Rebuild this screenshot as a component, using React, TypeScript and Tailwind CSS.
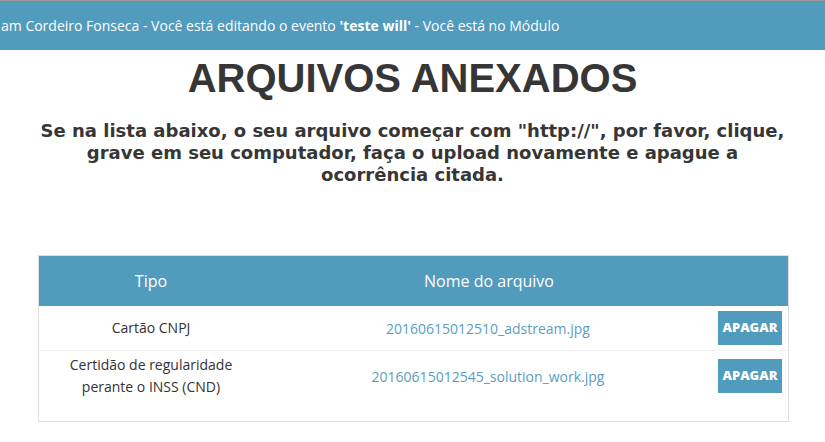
export default function App() {
  const rows = [
    { tipo: ["Cartão CNPJ"], arquivo: "20160615012510_adstream.jpg" },
    {
      tipo: ["Certidão de regularidade", "perante o INSS (CND)"],
      arquivo: "20160615012545_solution_work.jpg",
    },
  ];

  return (
    <div className="w-[825px] h-[442px] bg-white overflow-hidden font-['Open_Sans',sans-serif]">
      <div className="h-[50px] border-t border-[#9a9a9a] bg-[#519bbd] flex items-center text-white text-[14px] whitespace-nowrap">
        <span className="pl-px">
          am Cordeiro Fonseca - Você está editando o evento <b>'teste will'</b> - Você está no Módulo
        </span>
      </div>

      <h1 className="mt-[8px] text-center text-[#363636] text-[40px] leading-[40px] font-bold font-['Liberation_Sans',sans-serif]">
        ARQUIVOS ANEXADOS
      </h1>

      <p className="mt-[22px] text-center text-[#363636] text-[18px] leading-[22px] font-bold font-['DejaVu_Sans',sans-serif]">
        Se na lista abaixo, o seu arquivo começar com "http://", por favor, clique,
        <br />
        grave em seu computador, faça o upload novamente e apague a
        <br />
        ocorrência citada.
      </p>

      <div className="ml-[38px] mt-[69px] w-[751px] border border-[#dedede] pb-[20px]">
        <div className="h-[50px] bg-[#519bbd] flex items-center text-white text-[16px]">
          <div className="w-[224px] text-center">Tipo</div>
          <div className="w-[452px] text-center">Nome do arquivo</div>
        </div>
        {rows.map((r, i) => (
          <div
            key={i}
            className={`flex items-center ${i === 0 ? "h-[45px] border-b border-[#f0f0f0]" : "h-[50px]"}`}
          >
            <div className="w-[224px] text-center text-[14px] leading-[22px] text-[#333]">
              {r.tipo.map((t) => (
                <div key={t}>{t}</div>
              ))}
            </div>
            <div className="w-[450px] text-center text-[14px] text-[#5a9dc4]">{r.arquivo}</div>
            <div className="flex-1 flex justify-end pr-[6px]">
              <button className="w-[64px] h-[34px] bg-[#519bbd] text-white text-[13px] font-extrabold">
                APAGAR
              </button>
            </div>
          </div>
        ))}
      </div>
    </div>
  );
}
